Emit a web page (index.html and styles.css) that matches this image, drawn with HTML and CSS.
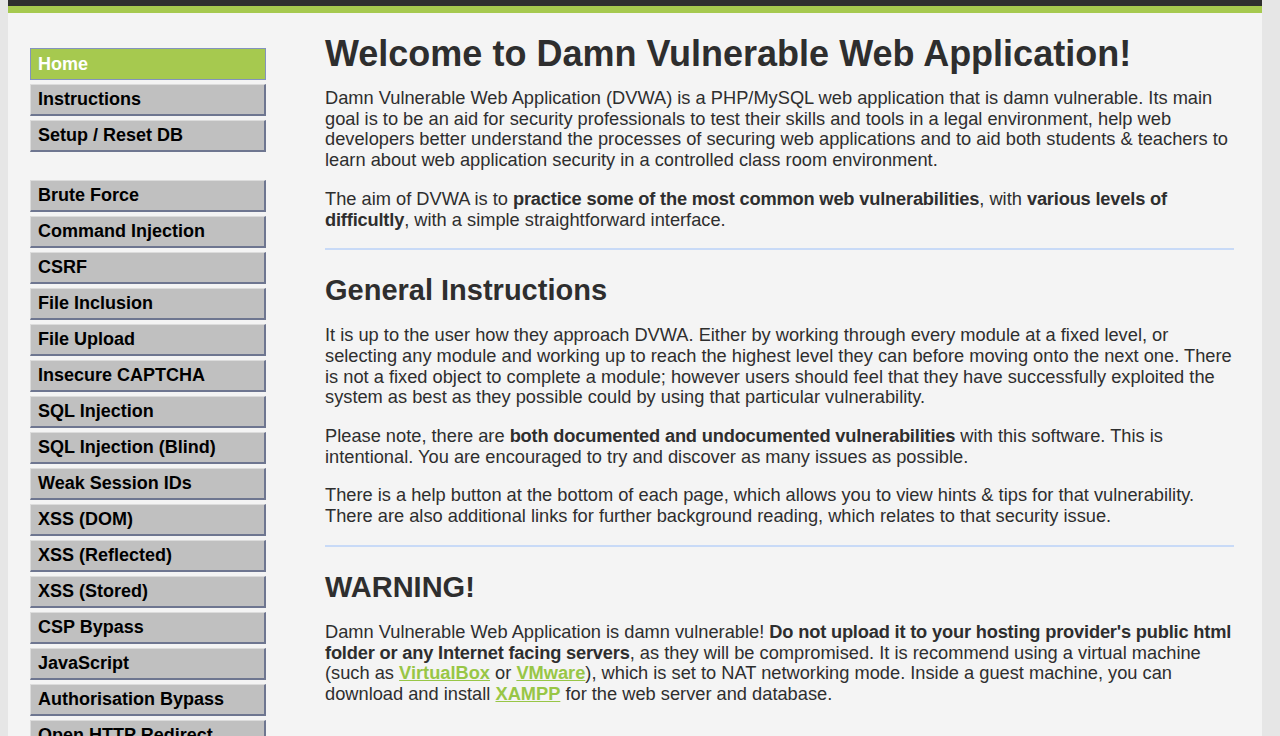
FILE: index.html
```html
<!DOCTYPE html>
<html lang="en">
<head>
    <meta charset="UTF-8">
    <title>Welcome :: Damn Vulnerable Web Application (DVWA)</title>
    <link rel="stylesheet" href="styles.css">
</head>
<body>
    <div class="container">
        <div class="header"></div>
        <div class="main">
            <div class="sidebar">
                <ul class="menu">
                    <li class="selected"><a href="#">Home</a></li>
                    <li><a href="#">Instructions</a></li>
                    <li><a href="#">Setup / Reset DB</a></li>
                </ul>
                <ul class="menu">
                    <li><a href="#">Brute Force</a></li>
                    <li><a href="#">Command Injection</a></li>
                    <li><a href="#">CSRF</a></li>
                    <li><a href="#">File Inclusion</a></li>
                    <li><a href="#">File Upload</a></li>
                    <li><a href="#">Insecure CAPTCHA</a></li>
                    <li><a href="#">SQL Injection</a></li>
                    <li><a href="#">SQL Injection (Blind)</a></li>
                    <li><a href="#">Weak Session IDs</a></li>
                    <li><a href="#">XSS (DOM)</a></li>
                    <li><a href="#">XSS (Reflected)</a></li>
                    <li><a href="#">XSS (Stored)</a></li>
                    <li><a href="#">CSP Bypass</a></li>
                    <li><a href="#">JavaScript</a></li>
                    <li><a href="#">Authorisation Bypass</a></li>
                    <li><a href="#">Open HTTP Redirect</a></li>
                </ul>
            </div>
            <div class="content">
                <h1>Welcome to Damn Vulnerable Web Application!</h1>
                <p>Damn Vulnerable Web Application (DVWA) is a PHP/MySQL web application that is damn vulnerable. Its main goal is to be an aid for security professionals to test their skills and tools in a legal environment, help web developers better understand the processes of securing web applications and to aid both students &amp; teachers to learn about web application security in a controlled class room environment.</p>
                <p>The aim of DVWA is to <b>practice some of the most common web vulnerabilities</b>, with <b>various levels of difficultly</b>, with a simple straightforward interface.</p>
                <hr>
                <h2>General Instructions</h2>
                <p>It is up to the user how they approach DVWA. Either by working through every module at a fixed level, or selecting any module and working up to reach the highest level they can before moving onto the next one. There is not a fixed object to complete a module; however users should feel that they have successfully exploited the system as best as they possible could by using that particular vulnerability.</p>
                <p>Please note, there are <b>both documented and undocumented vulnerabilities</b> with this software. This is intentional. You are encouraged to try and discover as many issues as possible.</p>
                <p>There is a help button at the bottom of each page, which allows you to view hints &amp; tips for that vulnerability. There are also additional links for further background reading, which relates to that security issue.</p>
                <hr>
                <h2>WARNING!</h2>
                <p>Damn Vulnerable Web Application is damn vulnerable! <b>Do not upload it to your hosting provider's public html folder or any Internet facing servers</b>, as they will be compromised. It is recommend using a virtual machine (such as <a href="#">VirtualBox</a> or <a href="#">VMware</a>), which is set to NAT networking mode. Inside a guest machine, you can download and install <a href="#">XAMPP</a> for the web server and database.</p>
            </div>
        </div>
    </div>
</body>
</html>
```

FILE: styles.css
```css
body {
    margin: 0 18px 0 8px;
    background-color: #e6e6e6;
    font-family: "Liberation Sans", Arial, sans-serif;
    color: #2e2e2e;
}
.container {
    background-color: #f4f4f4;
    min-height: 736px;
}
.header {
    height: 6px;
    background-color: #2f2f2f;
    border-bottom: 7px solid #a6c94f;
}
.main {
    display: flex;
}
.sidebar {
    width: 236px;
    padding: 35px 0 0 22px;
    flex-shrink: 0;
}
.menu {
    list-style-type: none;
    margin: 0 0 28px 0;
    padding: 0;
}
.menu li {
    margin-bottom: 4px;
}
.menu li a {
    display: block;
    height: 29px;
    line-height: 29px;
    padding-left: 7px;
    background-color: #c0c0c0;
    border-top: 1px solid #dcdcdc;
    border-left: 1px solid #dcdcdc;
    border-right: 2px solid #6e7690;
    border-bottom: 2px solid #6e7690;
    color: #000;
    font-weight: bold;
    font-size: 18px;
    text-decoration: none;
}
.menu li.selected a {
    background-color: #a6c94f;
    border: 1px solid #8393bd;
    height: 30px;
    line-height: 30px;
    color: #fff;
}
.content {
    width: 909px;
    margin-left: 59px;
    padding-top: 20px;
    line-height: 20.7px;
    font-size: 18.25px;
}
h1 {
    margin: 0 0 13px 0;
    font-size: 36px;
    line-height: 42px;
}
h2 {
    margin: 23px 0 18px 0;
    font-size: 29px;
    line-height: 34px;
}
p {
    margin: 0 0 18px 0;
}
p b {
    letter-spacing: -0.18px;
}
hr {
    border: none;
    border-top: 2px solid #c8daf7;
    margin: 18px 0 0 0;
}
.content a {
    color: #98c646;
    font-weight: bold;
    text-decoration: underline;
}
```
